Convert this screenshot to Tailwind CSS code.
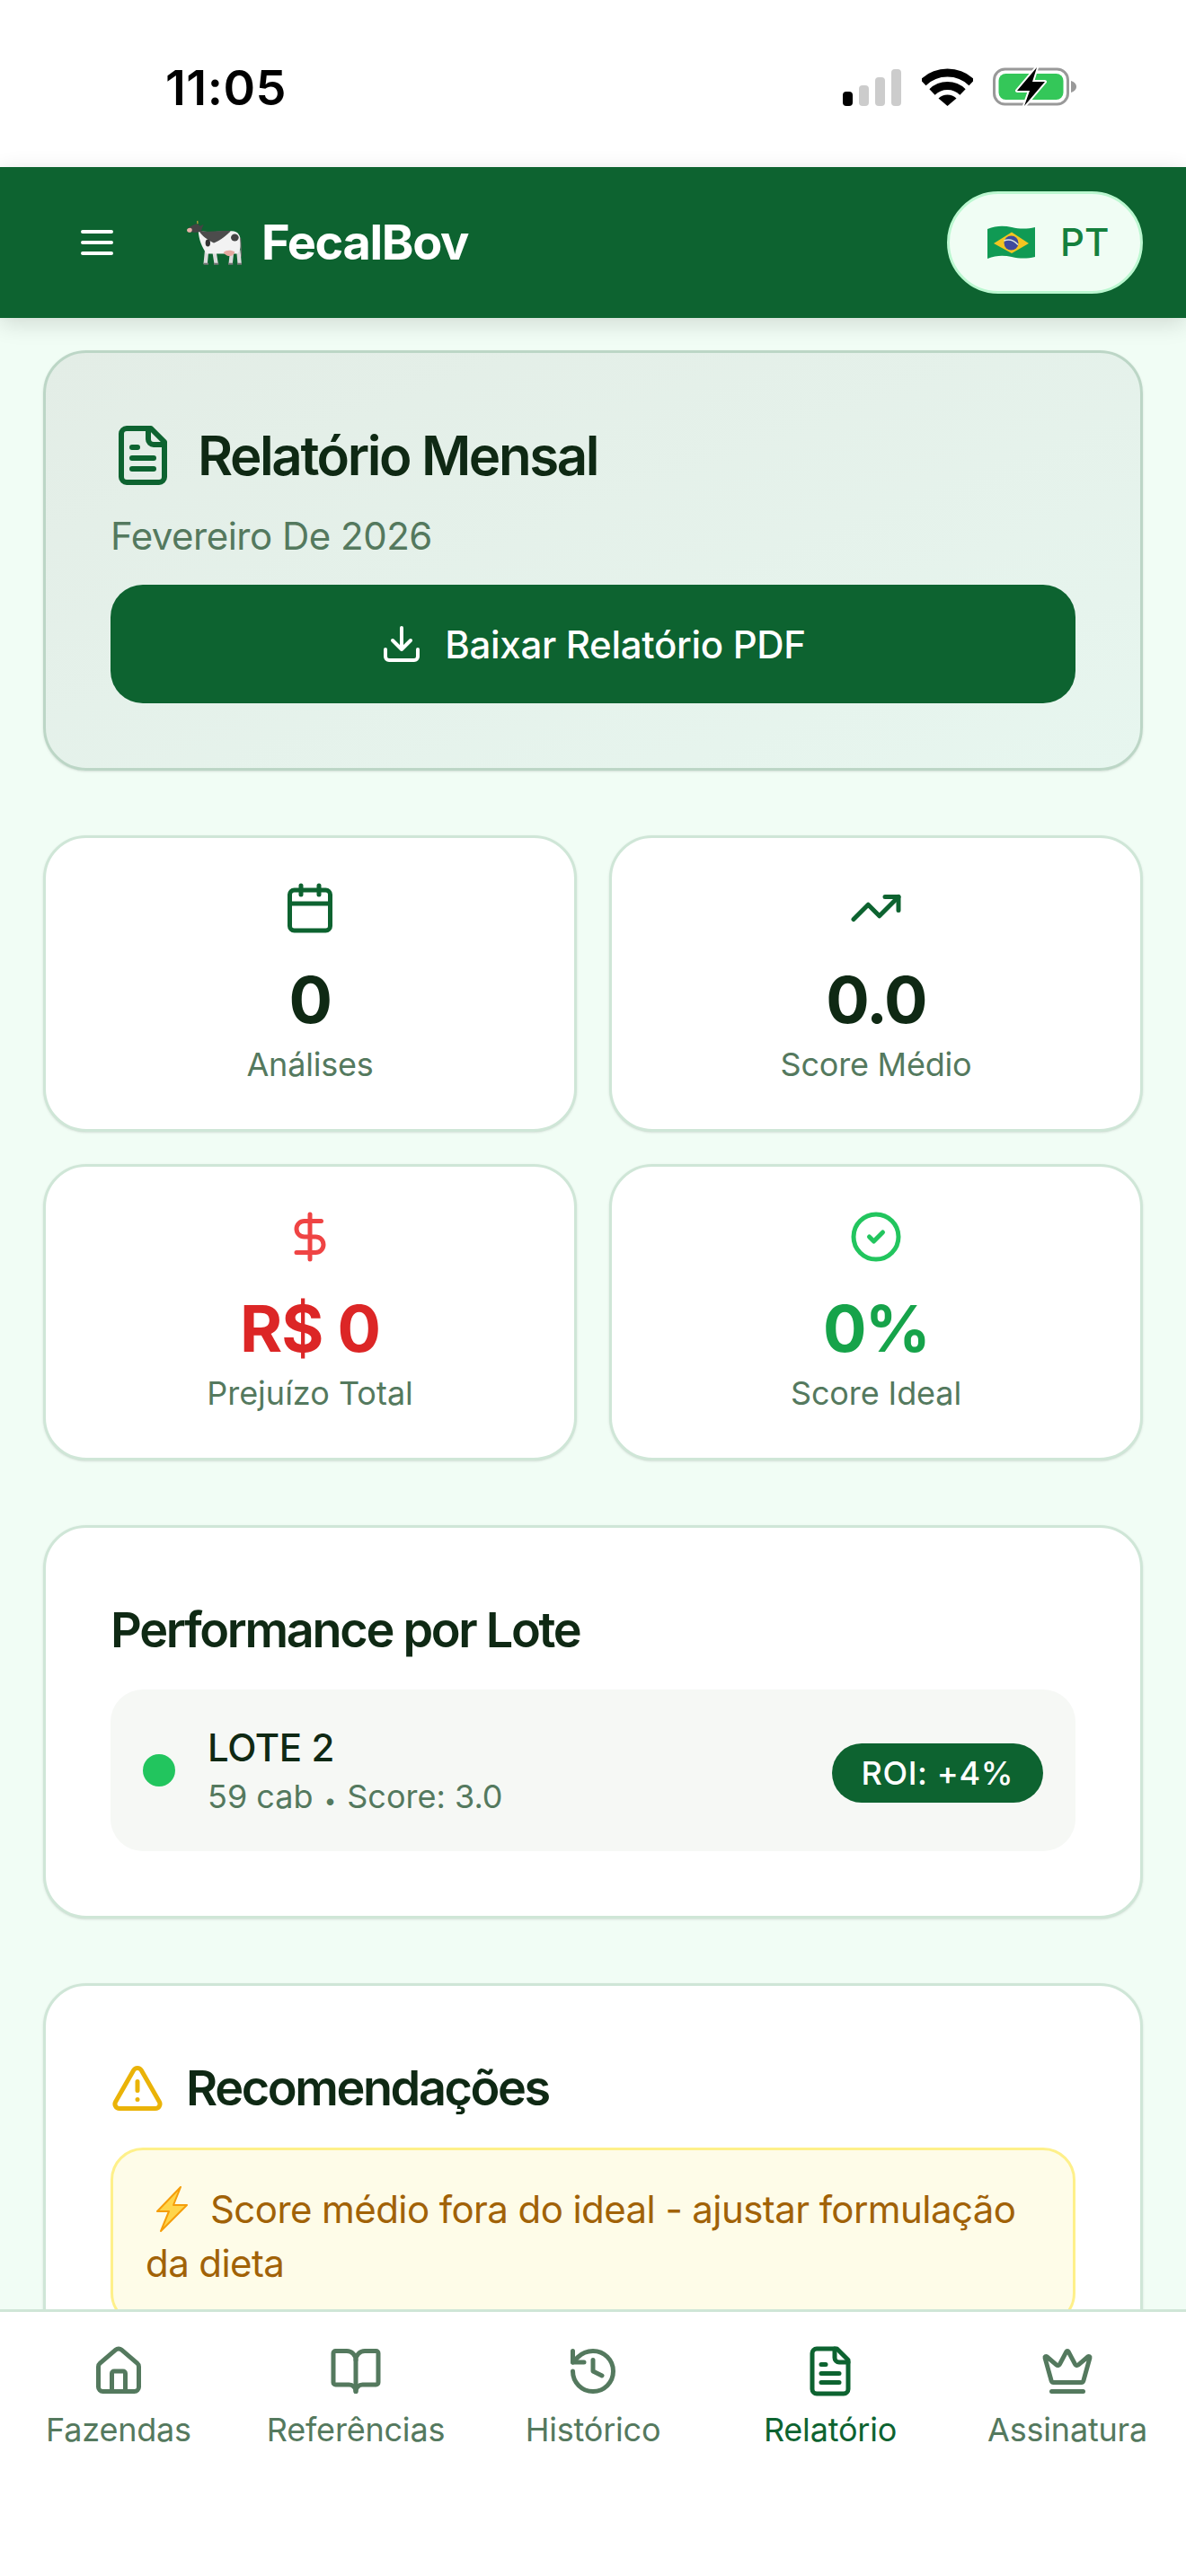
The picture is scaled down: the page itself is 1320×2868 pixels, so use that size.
<!DOCTYPE html>
<html lang="pt">

<head>
    <meta charset="UTF-8">
    <meta name="viewport" content="width=device-width, initial-scale=1.0">
    <title>FecalBov</title>
    <script src="https://cdn.jsdelivr.net/npm/@tailwindcss/browser@4"></script>
</head>

<body class="bg-[#f1fdf5] font-[Inter,sans-serif]">
    <div class="flex flex-col h-[2868px] w-[1320px] overflow-hidden">

        <!-- status bar -->
        <div class="flex items-center justify-between h-[186px] shrink-0 bg-white pl-[184px] pr-[122px] pt-[7px] pb-[0px]">
            <span class="mt-[2px] text-[54px] leading-[60px] font-semibold text-black tracking-[0.5px]">11:05</span>
            <div class="flex items-end gap-[23px]">
                <svg width="65" height="41" viewBox="0 0 65 41">
                    <rect x="0" y="25" width="11" height="16" rx="4" fill="#000" />
                    <rect x="18" y="18" width="11" height="23" rx="4" fill="#ccc" />
                    <rect x="36" y="9" width="11" height="32" rx="4" fill="#ccc" />
                    <rect x="54" y="0" width="11" height="41" rx="4" fill="#ccc" />
                </svg>
                <svg width="57" height="42" viewBox="0 0 57 42">
                    <path d="M1.4 16A39 39 0 0 1 55.6 16" fill="none" stroke="#000" stroke-width="9" />
                    <path d="M11.5 26.4A24.5 24.5 0 0 1 45.5 26.4" fill="none" stroke="#000" stroke-width="9" />
                    <path d="M28.5 42L18.5 33.5A14.5 14.5 0 0 1 38.5 33.5Z" fill="#000" />
                </svg>
                <svg width="93" height="43" viewBox="0 0 93 43" class="-ml-[1px]">
                    <rect x="1.5" y="2" width="82" height="39" rx="12" fill="none" stroke="#999" stroke-width="3" />
                    <rect x="6.5" y="7" width="72" height="29" rx="8" fill="#34c759" />
                    <path d="M87 15c3.5 1 6 3.500 6 6.500s-2.500 5.500-6 6.500z" fill="#999" />
                    <path d="M49 0L27 26H41L35 43L58 16H44Z" fill="#000" stroke="#fff" stroke-width="4" paint-order="stroke" stroke-linejoin="round" />
                </svg>
            </div>
        </div>

        <!-- header -->
        <header class="relative z-10 flex items-center justify-between h-[168px] shrink-0 bg-[#0d6330] pl-[84px] pr-[48px] shadow-[0_6px_24px_rgba(0,0,0,0.14)]">
            <div class="flex items-center">
                <svg width="48" height="48" viewBox="0 0 24 24" fill="none" stroke="#fff" stroke-width="2" stroke-linecap="round">
                    <path d="M4 6h16M4 12h16M4 18h16" />
                </svg>
                <svg width="61" height="51" viewBox="0 0 183 152" class="ml-[76px]">
                    <path d="M66 104L62 146M92 108L98 146M150 108L146 146M172 100L176 146" stroke="#dcdcdc" stroke-width="13" fill="none" />
                    <path d="M56 146H72M90 146H106M138 146H154M168 146H184" stroke="#777" stroke-width="6" />
                    <path d="M38 34C70 44 110 36 150 36C172 36 180 52 180 76C180 96 176 106 168 112H66C50 90 40 66 38 34Z" fill="#f2f2f2" />
                    <path d="M40 34C70 42 110 34 146 36C128 56 104 70 90 76C70 66 50 54 40 34Z" fill="#4c4c4c" />
                    <ellipse cx="70" cy="76" rx="8" ry="12" fill="#333" />
                    <ellipse cx="160" cy="58" rx="13" ry="12" fill="#444" />
                    <path d="M122 108C132 98 150 100 160 106C156 122 136 126 122 108Z" fill="#e6a9a0" />
                    <path d="M4 30C8 22 20 14 36 12L44 20L56 14L50 28C50 42 30 42 18 40C8 40 2 38 4 30Z" fill="#444" />
                    <path d="M0 32C2 26 12 24 16 28C20 36 14 42 6 41C2 40 0 36 0 32Z" fill="#e9b0a8" />
                    <path d="M36 12L35 2" stroke="#b5a13a" stroke-width="4" />
                    <path d="M179 60L182 122" stroke="#666" stroke-width="3" />
                </svg>
                <span class="ml-[22px] text-[54px] leading-[84px] font-bold text-white tracking-tight">FecalBov</span>
            </div>
            <div class="flex items-center h-[114px] w-[218px] rounded-full bg-[#f0fdf4] border-[3px] border-[#bbf7d0] pl-[42px]">
                <svg width="53" height="38" viewBox="0 0 53 38">
                    <path d="M0 4C10 0 18 0 27 2C36 4 44 4 53 2V35C44 37 36 37 27 35C18 33 10 33 0 37Z" fill="#109a54" />
                    <path d="M7 20L27 7.500L46 20L27 31Z" fill="#f3c521" />
                    <circle cx="26.500" cy="19.500" r="8" fill="#3f4a9e" />
                    <path d="M18.500 17C24 15 30 17 34 21.500" fill="none" stroke="#dfe8e0" stroke-width="1.500" />
                </svg>
                <span class="ml-[28px] text-[42px] leading-[60px] font-medium text-[#15803d]">PT</span>
            </div>
        </header>

        <!-- content -->
        <main class="flex-1 min-h-0 overflow-hidden px-[48px] pt-[36px]">
            <section class="rounded-[48px] border-[3px] border-[#bcd6c6] bg-linear-to-br from-[#e3ede6] to-[#e7f6ef] p-[72px] shadow-sm">
                <div class="flex items-center gap-[25px] h-[84px]">
                    <svg width="72" height="72" viewBox="0 0 24 24" fill="none" stroke="#0d6330" stroke-width="2" stroke-linecap="round" stroke-linejoin="round">
                        <path d="M15 2H6a2 2 0 0 0-2 2v16a2 2 0 0 0 2 2h12a2 2 0 0 0 2-2V7Z" />
                        <path d="M14 2v4a2 2 0 0 0 2 2h4" />
                        <path d="M10 9H8M16 13H8M16 17H8" />
                    </svg>
                    <h1 class="text-[60px] leading-[84px] font-semibold text-[#0f2914] tracking-[-2.4px]">Relatório Mensal</h1>
                </div>
                <p class="mt-[18px] text-[42px] leading-[60px] text-[#54795e] tracking-[-0.5px]">Fevereiro De 2026</p>
                <button class="flex items-center justify-center gap-[24px] mt-[24px] h-[132px] w-full rounded-[36px] bg-[#0d6330] text-[42px] font-medium text-white tracking-[-0.3px]">
                    <svg width="48" height="48" viewBox="0 0 24 24" fill="none" stroke="#fff" stroke-width="2" stroke-linecap="round" stroke-linejoin="round">
                        <path d="M12 3v12M7 10l5 5 5-5M21 15v4a2 2 0 0 1-2 2H5a2 2 0 0 1-2-2v-4" />
                    </svg>
                    Baixar Relatório PDF
                </button>
            </section>

            <div class="grid grid-cols-2 gap-[36px] mt-[72px]">
                <div class="flex flex-col items-center rounded-[48px] border-[3px] border-[#cfe6d7] bg-white pt-[48px] pb-[48px] shadow-sm">
                    <svg width="60" height="60" viewBox="0 0 24 24" fill="none" stroke="#0d6330" stroke-width="2" stroke-linecap="round" stroke-linejoin="round">
                        <path d="M8 2v4M16 2v4" />
                        <rect width="18" height="18" x="3" y="4" rx="2" />
                        <path d="M3 10h18" />
                    </svg>
                    <p class="mt-[24px] text-[72px] leading-[96px] font-bold text-[#0f2914] tracking-[-1.8px]">0</p>
                    <p class="text-[36px] leading-[48px] text-[#54795e] tracking-[-0.2px]">Análises</p>
                </div>
                <div class="flex flex-col items-center rounded-[48px] border-[3px] border-[#cfe6d7] bg-white pt-[48px] pb-[48px] shadow-sm">
                    <svg width="60" height="60" viewBox="0 0 24 24" fill="none" stroke="#0d6330" stroke-width="2" stroke-linecap="round" stroke-linejoin="round">
                        <path d="M16 7h6v6" />
                        <path d="m22 7-8.500 8.500-5-5L2 17" />
                    </svg>
                    <p class="mt-[24px] text-[72px] leading-[96px] font-bold text-[#0f2914] tracking-[-1.8px]">0.0</p>
                    <p class="text-[36px] leading-[48px] text-[#54795e] tracking-[-0.2px]">Score Médio</p>
                </div>
                <div class="flex flex-col items-center rounded-[48px] border-[3px] border-[#cfe6d7] bg-white pt-[48px] pb-[48px] shadow-sm">
                    <svg width="60" height="60" viewBox="0 0 24 24" fill="none" stroke="#ef4444" stroke-width="2" stroke-linecap="round" stroke-linejoin="round">
                        <path d="M12 2v20" />
                        <path d="M17 5H9.500a3.500 3.500 0 0 0 0 7h5a3.500 3.500 0 0 1 0 7H6" />
                    </svg>
                    <p class="mt-[24px] text-[72px] leading-[96px] font-bold text-[#dc2626] tracking-[-1px]">R$ 0</p>
                    <p class="text-[36px] leading-[48px] text-[#54795e]">Prejuízo Total</p>
                </div>
                <div class="flex flex-col items-center rounded-[48px] border-[3px] border-[#cfe6d7] bg-white pt-[48px] pb-[48px] shadow-sm">
                    <svg width="60" height="60" viewBox="0 0 24 24" fill="none" stroke="#22c55e" stroke-width="2" stroke-linecap="round" stroke-linejoin="round">
                        <circle cx="12" cy="12" r="10" />
                        <path d="m9 12 2 2 4-4" />
                    </svg>
                    <p class="mt-[24px] text-[72px] leading-[96px] font-bold text-[#16a34a] tracking-[-1.8px]">0%</p>
                    <p class="text-[36px] leading-[48px] text-[#54795e] tracking-[-0.1px]">Score Ideal</p>
                </div>
            </div>

            <section class="mt-[72px] rounded-[48px] border-[3px] border-[#cfe6d7] bg-white p-[72px] shadow-sm">
                <h2 class="text-[54px] leading-[84px] font-semibold text-[#0f2914] tracking-[-2.3px]">Performance por Lote</h2>
                <div class="flex items-center justify-between mt-[24px] h-[180px] rounded-[36px] bg-[#f6f8f5] px-[36px]">
                    <div class="flex items-center gap-[36px]">
                        <span class="size-[36px] rounded-full bg-[#22c55e]"></span>
                        <div class="mt-[2px]">
                            <p class="text-[42px] leading-[60px] font-medium text-[#0f2914] tracking-[-0.4px]">LOTE 2</p>
                            <p class="text-[36px] leading-[48px] text-[#54795e]">59 cab <span class="mx-[2px] text-[24px]">•</span> Score: 3.0</p>
                        </div>
                    </div>
                    <span class="mt-[6px] rounded-full bg-[#0d6330] px-[33px] py-[9px] text-[36px] leading-[48px] font-medium text-white tracking-[0.6px]">ROI: +4%</span>
                </div>
            </section>

            <section class="mt-[72px] rounded-[48px] border-[3px] border-[#cfe6d7] bg-white p-[72px] shadow-sm">
                <div class="flex items-center gap-[24px] h-[84px]">
                    <svg width="60" height="60" viewBox="0 0 24 24" fill="none" stroke="#eab308" stroke-width="2" stroke-linecap="round" stroke-linejoin="round">
                        <path d="m21.730 18-8-14a2 2 0 0 0-3.480 0l-8 14A2 2 0 0 0 4 21h16a2 2 0 0 0 1.730-3" />
                        <path d="M12 9v4M12 17h.01" />
                    </svg>
                    <h2 class="text-[54px] leading-[84px] font-semibold text-[#0f2914] tracking-[-2.4px]">Recomendações</h2>
                </div>
                <div class="mt-[24px] rounded-[36px] border-[3px] border-[#fef08a] bg-[#fefce8] p-[36px] text-[42px] leading-[60px] text-[#a16207] tracking-[-0.58px]">
                    <svg width="38" height="51" viewBox="0 0 38 51" class="inline-block align-[-10px] ml-[10px] mr-[24px]">
                        <path d="M29 1L3 28H16L7 50L36 21H21Z" fill="#ffd54a" stroke="#f59e0b" stroke-width="2" stroke-linejoin="round" />
                    </svg>Score médio fora do ideal - ajustar formulação da dieta
                </div>
            </section>
        </main>

        <!-- bottom nav -->
        <nav class="grid grid-cols-5 h-[297px] shrink-0 border-t-[3px] border-[#cfe6d7] bg-white pt-[36px] text-[36px] leading-[48px] text-[#54795e] tracking-[-0.2px]">
            <a class="flex flex-col items-center gap-[11px]">
                <svg width="60" height="60" viewBox="0 0 24 24" fill="none" stroke="#54795e" stroke-width="2" stroke-linecap="round" stroke-linejoin="round">
                    <path d="M15 21v-8a1 1 0 0 0-1-1h-4a1 1 0 0 0-1 1v8" />
                    <path d="M3 10a2 2 0 0 1 .709-1.528l7-5.999a2 2 0 0 1 2.582 0l7 5.999A2 2 0 0 1 21 10v9a2 2 0 0 1-2 2H5a2 2 0 0 1-2-2z" />
                </svg>
                Fazendas
            </a>
            <a class="flex flex-col items-center gap-[11px]">
                <svg width="60" height="60" viewBox="0 0 24 24" fill="none" stroke="#54795e" stroke-width="2" stroke-linecap="round" stroke-linejoin="round">
                    <path d="M12 7v14" />
                    <path d="M3 18a1 1 0 0 1-1-1V4a1 1 0 0 1 1-1h5a4 4 0 0 1 4 4 4 4 0 0 1 4-4h5a1 1 0 0 1 1 1v13a1 1 0 0 1-1 1h-6a3 3 0 0 0-3 3 3 3 0 0 0-3-3z" />
                </svg>
                Referências
            </a>
            <a class="flex flex-col items-center gap-[11px]">
                <svg width="60" height="60" viewBox="0 0 24 24" fill="none" stroke="#54795e" stroke-width="2" stroke-linecap="round" stroke-linejoin="round">
                    <path d="M3 12a9 9 0 1 0 9-9 9.750 9.750 0 0 0-6.740 2.740L3 8" />
                    <path d="M3 3v5h5" />
                    <path d="M12 7v5l4 2" />
                </svg>
                Histórico
            </a>
            <a class="flex flex-col items-center gap-[11px] text-[#0d6330]">
                <svg width="60" height="60" viewBox="0 0 24 24" fill="none" stroke="#0d6330" stroke-width="2" stroke-linecap="round" stroke-linejoin="round">
                    <path d="M15 2H6a2 2 0 0 0-2 2v16a2 2 0 0 0 2 2h12a2 2 0 0 0 2-2V7Z" />
                    <path d="M14 2v4a2 2 0 0 0 2 2h4" />
                    <path d="M10 9H8M16 13H8M16 17H8" />
                </svg>
                Relatório
            </a>
            <a class="flex flex-col items-center gap-[11px]">
                <svg width="60" height="60" viewBox="0 0 24 24" fill="none" stroke="#54795e" stroke-width="2" stroke-linecap="round" stroke-linejoin="round">
                    <path d="M11.562 3.266a.5.5 0 0 1 .876 0L15.390 8.870a1 1 0 0 0 1.516.294L21.183 5.500a.5.5 0 0 1 .798.519l-2.834 10.246a1 1 0 0 1-.956.734H5.810a1 1 0 0 1-.957-.734L2.020 6.020a.5.5 0 0 1 .798-.519l4.276 3.664a1 1 0 0 0 1.516-.294z" />
                    <path d="M5 21h14" />
                </svg>
                Assinatura
            </a>
        </nav>
    </div>
</body>

</html>
